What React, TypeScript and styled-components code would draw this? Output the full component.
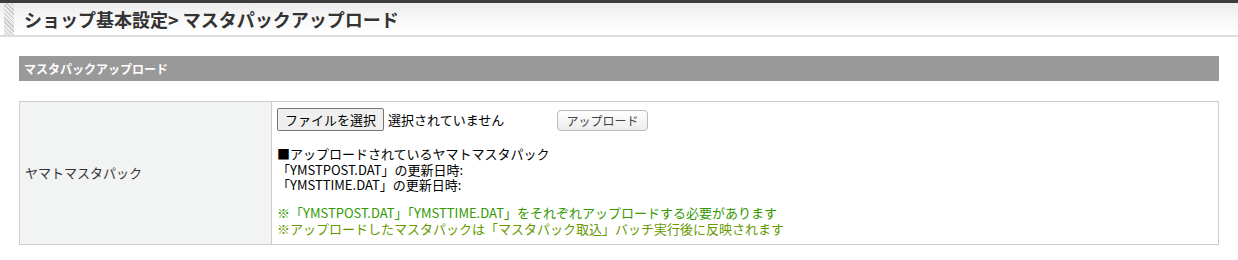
import React from 'react';
import styled, {createGlobalStyle} from 'styled-components';

const GlobalStyle = createGlobalStyle`
  body {
    margin: 0;
    background: #fff;
    font-family: "Noto Sans CJK JP", "Noto Sans", sans-serif;
    font-size: 13px;
    color: #333;
  }
`;

const Header = styled.div`
  border-top: 3px solid #3c3c3c;
  height: 32px;
  display: flex;
  align-items: center;
  background: linear-gradient(to bottom, #ececec 0%, #fafafa 60%, #ffffff 100%);
  border-bottom: 2px solid #dcdcdc;
  padding-left: 4px;
`;

const Stripe = styled.div`
  width: 10px;
  height: 100%;
  background: repeating-linear-gradient(
    45deg,
    #c8c8c8 0px,
    #c8c8c8 1px,
    #ececec 1px,
    #ececec 3px
  );
`;

const Title = styled.h1`
  margin: 0 0 0 10px;
  font-size: 18px;
  font-weight: bold;
  color: #333;
`;

const Content = styled.div`
  padding: 19px 19px 0;
`;

const SectionBar = styled.div`
  background: #999;
  color: #fff;
  font-size: 12px;
  font-weight: bold;
  height: 25px;
  line-height: 25px;
  padding-left: 5px;
`;

const Table = styled.table`
  margin-top: 20px;
  width: 100%;
  border-collapse: collapse;
  table-layout: fixed;
`;

const LabelCell = styled.th`
  width: 241px;
  background: #f2f3f3;
  border: 1px solid #cccccc;
  text-align: left;
  font-weight: normal;
  padding: 0 5px;
  font-size: 13px;
  color: #333;
`;

const ValueCell = styled.td`
  border: 1px solid #cccccc;
  padding: 5px 5px 7px;
  vertical-align: top;
`;

const UploadRow = styled.div`
  display: flex;
  align-items: center;
  height: 24px;
`;

const FileButton = styled.span`
  display: inline-flex;
  align-items: center;
  height: 23px;
  padding: 0 7px;
  box-sizing: border-box;
  border: 1px solid #767676;
  border-radius: 2px;
  background: #efefef;
  color: #000;
  font-size: 13px;
`;

const FileName = styled.span`
  margin-left: 4px;
  color: #000;
  width: 169px;
`;

const UploadButton = styled.button`
  height: 21px;
  width: 91px;
  margin-top: 2px;
  padding: 0;
  border: 1px solid #b8b8c0;
  border-radius: 4px;
  background: linear-gradient(to bottom, #ffffff, #ececec);
  font-family: inherit;
  font-size: 12px;
  color: #444;
`;

const Info = styled.div`
  margin-top: 15px;
  line-height: 15.5px;
  color: #000;
`;

const Note = styled.div<{$color: string}>`
  line-height: 16px;
  color: ${p => p.$color};
`;

const Notes = styled.div`
  margin-top: 12px;
`;

export default function App() {
    return (
        <>
            <GlobalStyle />
            <Header>
                <Stripe />
                <Title>ショップ基本設定&gt; マスタパックアップロード</Title>
            </Header>
            <Content>
                <SectionBar>マスタパックアップロード</SectionBar>
                <Table>
                    <tbody>
                        <tr>
                            <LabelCell>ヤマトマスタパック</LabelCell>
                            <ValueCell>
                                <UploadRow>
                                    <FileButton>ファイルを選択</FileButton>
                                    <FileName>選択されていません</FileName>
                                    <UploadButton>アップロード</UploadButton>
                                </UploadRow>
                                <Info>
                                    <div>■アップロードされているヤマトマスタパック</div>
                                    <div>「YMSTPOST.DAT」の更新日時:</div>
                                    <div>「YMSTTIME.DAT」の更新日時:</div>
                                </Info>
                                <Notes>
                                    <Note $color="#339900">※「YMSTPOST.DAT」「YMSTTIME.DAT」をそれぞれアップロードする必要があります</Note>
                                    <Note $color="#669900">※アップロードしたマスタパックは「マスタパック取込」バッチ実行後に反映されます</Note>
                                </Notes>
                            </ValueCell>
                        </tr>
                    </tbody>
                </Table>
            </Content>
        </>
    );
}
